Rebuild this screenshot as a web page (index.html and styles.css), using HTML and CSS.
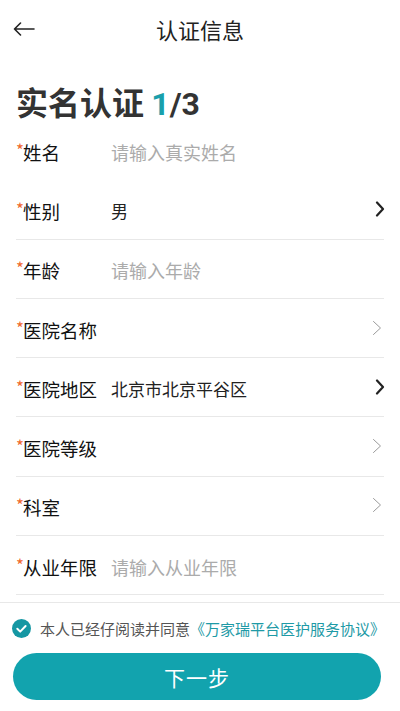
FILE: index.html
```html
<!DOCTYPE html>
<html lang="zh-CN">
<head>
<meta charset="utf-8">
<meta name="viewport" content="width=400">
<title>认证信息</title>
<link rel="stylesheet" href="styles.css">
</head>
<body>
<div class="page">
  <header class="topbar">
    <span class="back">
      <svg width="22" height="14" viewBox="0 0 22 14"><path d="M21 7H1.5M7.5 1L1.5 7l6 6" fill="none" stroke="#222" stroke-width="1.6" stroke-linecap="round" stroke-linejoin="round"/></svg>
    </span>
    <h1 class="title">认证信息</h1>
    <span></span>
  </header>

  <h2 class="heading">实名认证 <span class="num"><span class="cur">1</span>/3</span></h2>

  <div class="form">
    <div class="row first">
      <div class="label"><i>*</i>姓名</div>
      <div class="value ph">请输入真实姓名</div>
    </div>
    <div class="row">
      <div class="label"><i>*</i>性别</div>
      <div class="value">男</div>
      <svg class="chev dark" width="10" height="16" viewBox="0 0 10 16"><path d="M2 1.5l6 6.5-6 6.5" fill="none" stroke="#222" stroke-width="2.2" stroke-linecap="round" stroke-linejoin="round"/></svg>
    </div>
    <div class="row">
      <div class="label"><i>*</i>年龄</div>
      <div class="value ph">请输入年龄</div>
    </div>
    <div class="row">
      <div class="label"><i>*</i>医院名称</div>
      <div class="value"></div>
      <svg class="chev light" width="10" height="16" viewBox="0 0 10 16"><path d="M1.5 1.5l7 6.5-7 6.5" fill="none" stroke="#9a9a9a" stroke-width="1" stroke-linecap="round" stroke-linejoin="round"/></svg>
    </div>
    <div class="row">
      <div class="label"><i>*</i>医院地区</div>
      <div class="value">北京市北京平谷区</div>
      <svg class="chev dark" width="10" height="16" viewBox="0 0 10 16"><path d="M2 1.5l6 6.5-6 6.5" fill="none" stroke="#222" stroke-width="2.2" stroke-linecap="round" stroke-linejoin="round"/></svg>
    </div>
    <div class="row">
      <div class="label"><i>*</i>医院等级</div>
      <div class="value"></div>
      <svg class="chev light" width="10" height="16" viewBox="0 0 10 16"><path d="M1.5 1.5l7 6.5-7 6.5" fill="none" stroke="#9a9a9a" stroke-width="1" stroke-linecap="round" stroke-linejoin="round"/></svg>
    </div>
    <div class="row">
      <div class="label"><i>*</i>科室</div>
      <div class="value"></div>
      <svg class="chev light" width="10" height="16" viewBox="0 0 10 16"><path d="M1.5 1.5l7 6.5-7 6.5" fill="none" stroke="#9a9a9a" stroke-width="1" stroke-linecap="round" stroke-linejoin="round"/></svg>
    </div>
    <div class="row">
      <div class="label"><i>*</i>从业年限</div>
      <div class="value ph">请输入从业年限</div>
    </div>
  </div>

  <footer class="bottom">
    <div class="agree">
      <svg class="check" width="19" height="19" viewBox="0 0 19 19"><circle cx="9.5" cy="9.5" r="9.5" fill="#1597a3"/><path d="M5.3 9.8l2.9 2.8 5.4-5.6" fill="none" stroke="#fff" stroke-width="2" stroke-linecap="round" stroke-linejoin="round"/></svg>
      <span class="agree-text">本人已经仔阅读并同意<span class="link">《万家瑞平台医护服务协议》</span></span>
    </div>
    <button class="next" type="button">下一步</button>
  </footer>
</div>
</body>
</html>
```

FILE: styles.css
```css
* { box-sizing: border-box; }
html, body { margin: 0; padding: 0; background: #fff; }
body {
  font-family: "Noto Sans CJK SC", "Noto Sans", sans-serif;
  color: #222;
  width: 400px;
}
.page { width: 400px; }

.topbar {
  display: grid;
  grid-template-columns: 60px 1fr 60px;
  align-items: center;
  height: 57px;
}
.back {
  display: flex;
  align-items: center;
  padding-left: 13px;
  height: 57px;
}
.title {
  margin: 0;
  text-align: center;
  font-size: 22px;
  font-weight: 400;
  line-height: 1;
  color: #222;
}

.heading {
  margin: 27px 0 0;
  padding-left: 16px;
  font-size: 32px;
  font-weight: 700;
  line-height: 35px;
  height: 37px;
  color: #333;
}
.num { font-family: Roboto, "Noto Sans", sans-serif; font-weight: 700; }
.cur { color: #1a9fab; }

.form { margin: 0 16px; }
.row {
  display: flex;
  align-items: center;
  height: 59.3px;
  padding-top: 3px;
  border-bottom: 1px solid #e8e8e8;
}
.row.first { border-bottom-color: transparent; }
.label {
  width: 95px;
  flex: none;
  font-size: 18.5px;
  font-weight: 400;
  line-height: 24px;
  color: #111;
  white-space: nowrap;
}
.label i {
  font-style: normal;
  color: #ef6a2e;
  font-size: 17px;
  display: inline-block;
  width: 7px;
  vertical-align: 3px;
  line-height: 10px;
}
.value {
  flex: 1;
  font-size: 17px;
  line-height: 24px;
  color: #222;
  white-space: nowrap;
}
.value.ph { font-size: 18px; color: #ababab; }
.chev { flex: none; margin-top: -4px; }
.chev.dark { margin-right: -1px; }
.chev.light { margin-right: 2px; }

.bottom {
  margin-top: 7px;
  border-top: 1px solid #e8e8e8;
}
.agree {
  display: flex;
  align-items: center;
  height: 50px;
  padding-left: 12px;
  padding-top: 1px;
}
.check { flex: none; margin-right: 9px; }
.agree-text {
  font-size: 15px;
  color: #555;
  white-space: nowrap;
  line-height: 20px;
}
.link { color: #1e9aa6; }
.next {
  display: block;
  margin: 0 0 0 13px;
  width: 368px;
  height: 47px;
  border: none;
  border-radius: 24px;
  background: #12a3ae;
  color: #fff;
  font-family: "Noto Sans CJK SC", "Noto Sans", sans-serif;
  font-size: 21px;
  letter-spacing: 1px;
  padding: 0;
}
```
